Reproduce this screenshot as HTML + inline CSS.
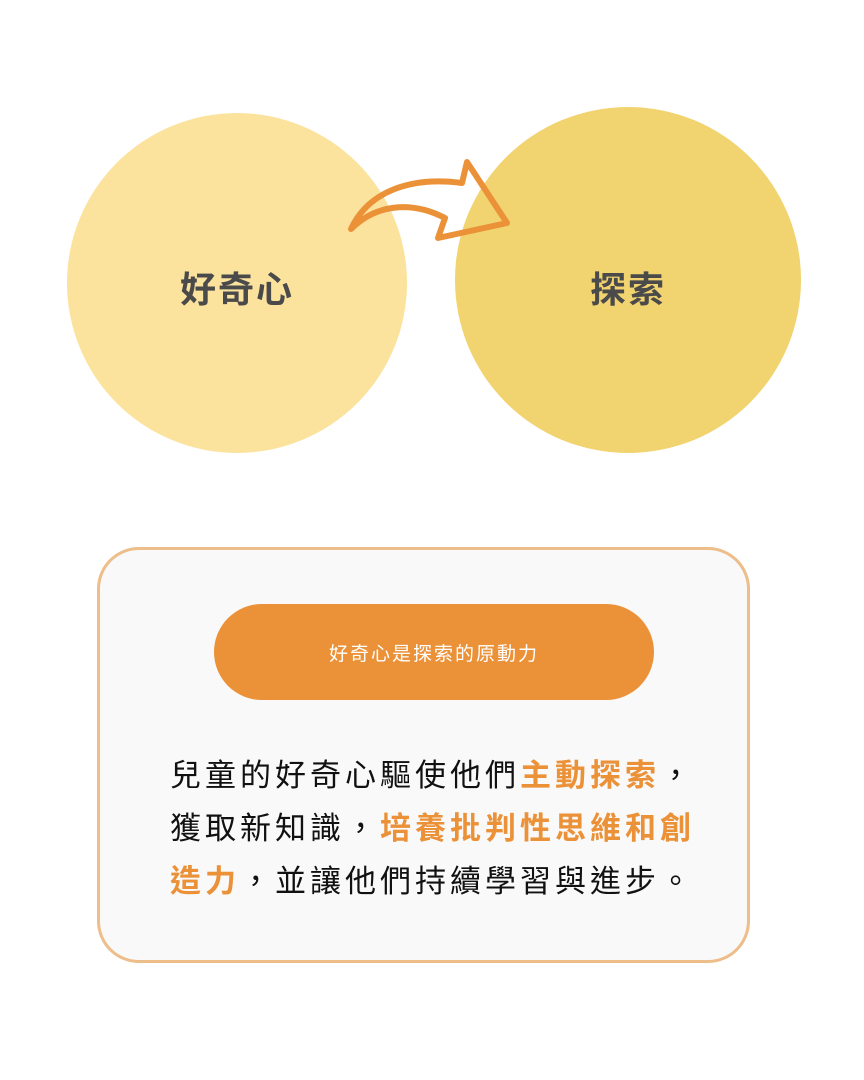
<!DOCTYPE html>
<html><head><meta charset="utf-8"><style>
body{margin:0;width:864px;height:1080px;background:#fff;position:relative;overflow:hidden;font-family:"Liberation Sans","Noto Sans CJK TC",sans-serif}
.c{position:absolute;border-radius:50%;display:flex;align-items:center;justify-content:center;font-weight:bold;font-size:36px;color:#4a4a4a;letter-spacing:2px;box-sizing:border-box}
.box{position:absolute;left:97px;top:547px;width:647px;height:410px;border:3px solid #EDBD8A;border-radius:42px;background:#F9F9F9}
.pill{position:absolute;left:214px;top:604px;width:440px;height:96px;border-radius:48px;background:#EB9138;color:#fff;font-size:19px;letter-spacing:2px;display:flex;align-items:center;justify-content:center}
.p{position:absolute;left:170px;top:749px;width:580px;font-size:31px;line-height:53px;letter-spacing:4px;color:#111}
.o{color:#EB9138;font-weight:bold}
</style></head><body>
<div class="c" style="left:67px;top:113px;width:340px;height:340px;background:#FBE29D;padding-top:8px">好奇心</div>
<div class="c" style="left:455px;top:107px;width:346px;height:346px;background:#F1D36F;padding-top:14px">探索</div>
<svg style="position:absolute;left:0;top:0" width="864" height="500">
<path d="M351 229 C368 192 410 176 462 183 L467 162 L507 223 L438 238 L445 218 C410 200 375 205 351 229 Z" fill="none" stroke="#EB9138" stroke-width="6" stroke-linejoin="round"/>
</svg>
<div class="box"></div>
<div class="pill">好奇心是探索的原動力</div>
<div class="p">兒童的好奇心驅使他們<span class="o">主動探索</span>，<br>獲取新知識，<span class="o">培養批判性思維和創</span><br><span class="o">造力</span>，並讓他們持續學習與進步。</div>
</body></html>
